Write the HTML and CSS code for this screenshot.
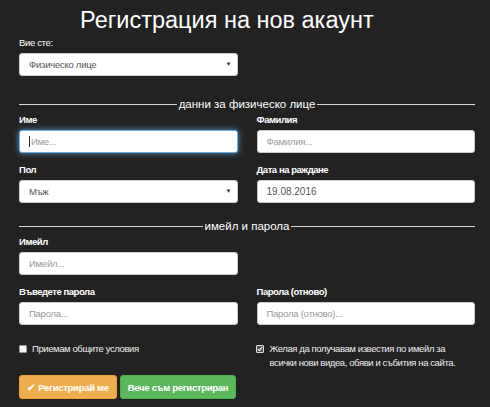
FILE: index.html
```html
<!DOCTYPE html>
<html lang="bg">
<head>
<meta charset="utf-8">
<link rel="stylesheet" href="styles.css">
</head>
<body>
<div class="page">
  <h1 class="title">Регистрация на нов акаунт</h1>
  <div class="grid">
    <div class="group">
      <div class="label light">Вие сте:</div>
      <div class="field select">Физическо лице<span class="caret">▼</span></div>
    </div>
  </div>
  <div class="divider first"><span class="line"></span><span class="dtext">данни за физическо лице</span><span class="line"></span></div>
  <div class="grid">
    <div class="group">
      <div class="label">Име</div>
      <div class="field focus"><span class="cursor"></span><span class="ph">Име...</span></div>
    </div>
    <div class="group">
      <div class="label">Фамилия</div>
      <div class="field"><span class="ph">Фамилия...</span></div>
    </div>
    <div class="group">
      <div class="label">Пол</div>
      <div class="field select">Мъж<span class="caret">▼</span></div>
    </div>
    <div class="group">
      <div class="label">Дата на раждане</div>
      <div class="field date">19.08.2016</div>
    </div>
  </div>
  <div class="divider second"><span class="line"></span><span class="dtext">имейл и парола</span><span class="line"></span></div>
  <div class="grid">
    <div class="group">
      <div class="label">Имейл</div>
      <div class="field"><span class="ph">Имейл...</span></div>
    </div>
    <div></div>
    <div class="group">
      <div class="label">Въведете парола</div>
      <div class="field"><span class="ph">Парола...</span></div>
    </div>
    <div class="group">
      <div class="label">Парола (отново)</div>
      <div class="field"><span class="ph">Парола (отново)...</span></div>
    </div>
  </div>
  <div class="grid checks">
    <div class="check"><span class="box"></span><span class="ctext">Приемам общите условия</span></div>
    <div class="check right"><span class="box checked"><svg viewBox="0 0 8 8" width="6" height="6"><path d="M1.2 4.2 L3.2 6.1 L6.9 1.6" fill="none" stroke="#fff" stroke-width="1.4"/></svg></span><span class="ctext">Желая да получавам известия по имейл за всички нови видеа, обяви и събития на сайта.</span></div>
  </div>
  <div class="buttons">
    <div class="btn orange"><span class="tick">✔</span>Регистрирай ме</div>
    <div class="btn green">Вече съм регистриран</div>
  </div>
</div>
</body>
</html>
```
FILE: styles.css
```css
html, body {
  margin: 0;
  padding: 0;
  background: #222222;
}
body {
  font-family: "Liberation Sans", Arial, sans-serif;
  color: #ffffff;
  font-size: 10px;
}
.page {
  width: 456px;
  padding: 0 0 0 19px;
}
.title {
  margin: 0;
  padding: 6px 0 0 61px;
  height: 30px;
  font-size: 23.5px;
  font-weight: normal;
  line-height: 28px;
  color: #ffffff;
}
.label {
  line-height: 14px;
  height: 14px;
  margin-bottom: 3px;
  font-size: 9.5px;
  font-weight: bold;
  color: #ffffff;
  letter-spacing: -0.45px;
}
.label.light {
  font-weight: normal;
  letter-spacing: -0.35px;
}
.group {
  margin-bottom: 10px;
}
.field {
  box-sizing: border-box;
  height: 23px;
  background: #ffffff;
  border: 1px solid #cccccc;
  border-radius: 3px;
  padding: 0 9px;
  display: flex;
  align-items: center;
  color: #555555;
  font-size: 9.5px;
  letter-spacing: -0.25px;
  position: relative;
}
.field.date {
  font-size: 10px;
  letter-spacing: 0;
}
.field.focus {
  border-color: #66afe9;
  box-shadow: 0 0 6px rgba(102, 175, 233, 0.8);
}
.cursor {
  width: 1px;
  height: 11px;
  background: #333;
  margin-right: 1px;
}
.ph {
  color: #999999;
}
.select .caret {
  position: absolute;
  right: 5px;
  top: 7px;
  font-size: 6px;
  color: #333;
  letter-spacing: 0;
}
.grid {
  display: grid;
  grid-template-columns: 1fr 1fr;
  column-gap: 19px;
}
.divider {
  display: flex;
  align-items: center;
  height: 16px;
  margin-bottom: 1px;
}
.divider.first {
  margin-top: 10px;
}
.divider.second {
  margin-top: 5px;
}
.divider .line {
  flex: 1;
  height: 1px;
  background: #d8d8d8;
}
.dtext {
  font-size: 11.5px;
  color: #ffffff;
  padding: 0 2px;
  line-height: 16px;
}
.checks {
  margin-top: 7px;
}
.check {
  display: flex;
  align-items: flex-start;
  line-height: 14px;
  font-size: 9.5px;
  letter-spacing: -0.4px;
}
.box {
  flex: none;
  box-sizing: border-box;
  width: 8px;
  height: 8px;
  margin-top: 3px;
  margin-right: 5px;
  background: #f4f4f4;
  border: 1px solid #999;
  border-radius: 1px;
  display: flex;
  align-items: center;
  justify-content: center;
}
.box.checked {
  background: #555;
  border-color: #ddd;
}
.check.right .box {
  margin-left: -1px;
  margin-right: 6px;
}
.check.right .ctext {
  padding-right: 8px;
}
.ctext {
  color: #eeeeee;
}
.buttons {
  display: flex;
  gap: 3px;
  margin-top: 5px;
}
.btn {
  box-sizing: border-box;
  height: 24px;
  border-radius: 3px;
  display: flex;
  align-items: center;
  justify-content: center;
  font-weight: bold;
  color: #ffffff;
  font-size: 9.5px;
  letter-spacing: -0.3px;
}
.btn.orange {
  width: 98px;
  background: #f0ad4e;
  border: 1px solid #eea236;
}
.btn.green {
  width: 116px;
  background: #5cb85c;
  border: 1px solid #4cae4c;
}
.tick {
  margin-right: 3px;
  letter-spacing: 0;
}
```
